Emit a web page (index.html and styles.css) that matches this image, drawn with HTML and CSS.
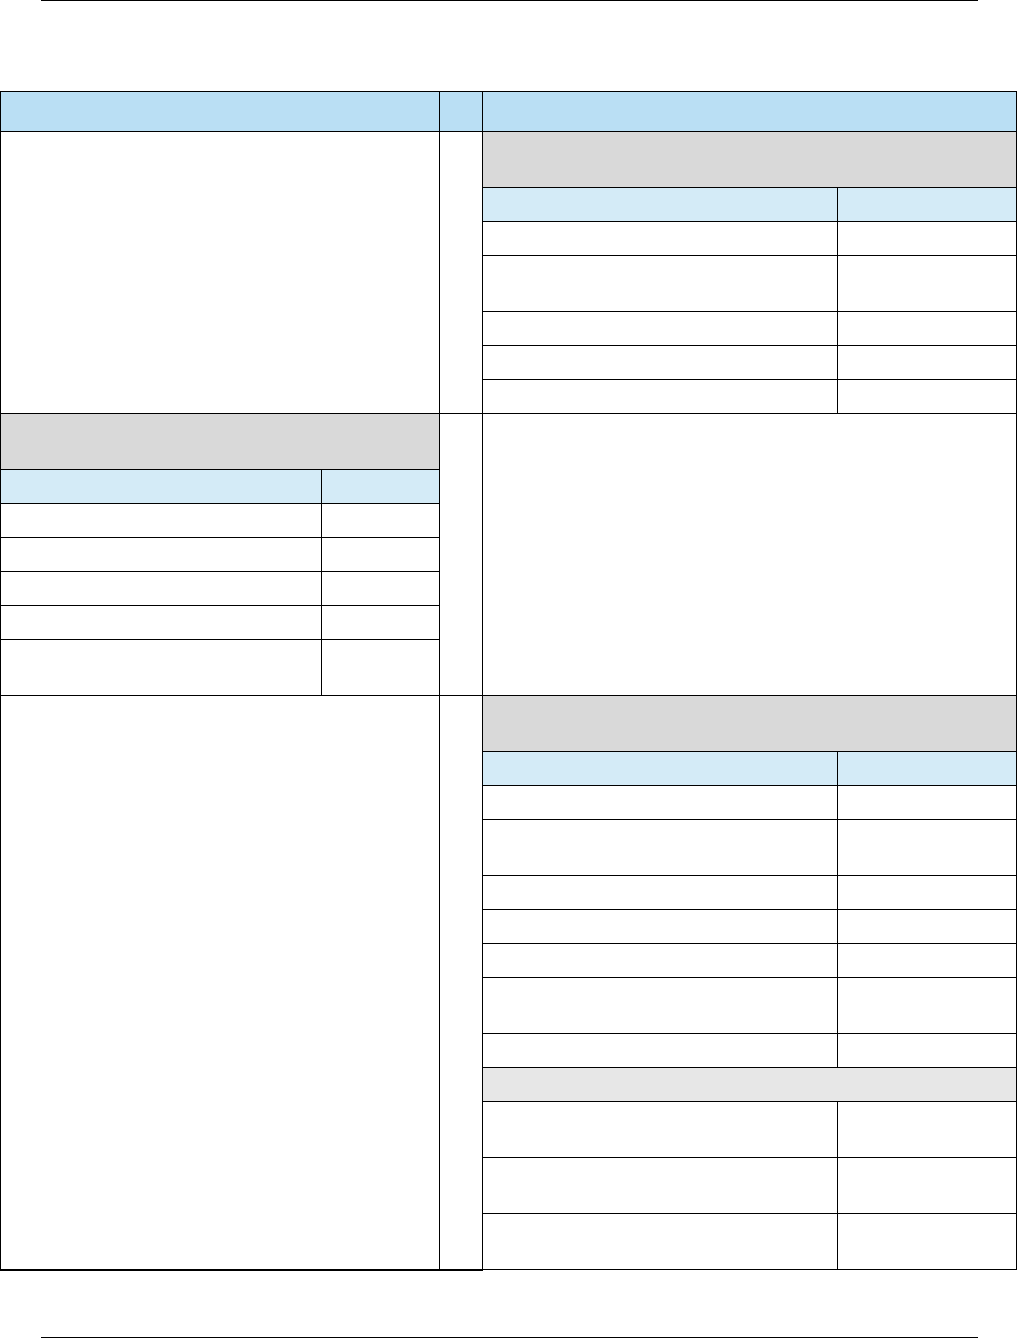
FILE: index.html
```html
<!DOCTYPE html>
<html lang="en">
<head>
    <meta charset="UTF-8">
    <meta name="viewport" content="width=device-width, initial-scale=1.0">
    <title>Table</title>
    <link rel="stylesheet" href="styles.css">
</head>
<body>
    <div class="rule rule-top"></div>

    <table class="grid">
        <colgroup>
            <col class="col-left">
            <col class="col-mid">
            <col class="col-right">
        </colgroup>
        <tr class="head">
            <td></td>
            <td></td>
            <td></td>
        </tr>
        <tr class="block">
            <td></td>
            <td></td>
            <td class="holder">
                <table class="sub">
                    <colgroup><col class="sub-wide"><col></colgroup>
                    <tr class="r55"><td class="title" colspan="2"></td></tr>
                    <tr class="r34 sub-head"><td></td><td></td></tr>
                    <tr class="r34"><td></td><td></td></tr>
                    <tr class="r56"><td></td><td></td></tr>
                    <tr class="r34"><td></td><td></td></tr>
                    <tr class="r34"><td></td><td></td></tr>
                    <tr class="r34"><td></td><td></td></tr>
                </table>
            </td>
        </tr>
        <tr class="block">
            <td class="holder">
                <table class="sub">
                    <colgroup><col class="sub-narrow"><col></colgroup>
                    <tr class="r55"><td class="title" colspan="2"></td></tr>
                    <tr class="r34 sub-head"><td></td><td></td></tr>
                    <tr class="r34"><td></td><td></td></tr>
                    <tr class="r34"><td></td><td></td></tr>
                    <tr class="r34"><td></td><td></td></tr>
                    <tr class="r34"><td></td><td></td></tr>
                    <tr class="r56"><td></td><td></td></tr>
                </table>
            </td>
            <td></td>
            <td></td>
        </tr>
        <tr class="block last">
            <td class="thick"></td>
            <td class="thick"></td>
            <td class="holder">
                <table class="sub">
                    <colgroup><col class="sub-wide"><col></colgroup>
                    <tr class="r55"><td class="title" colspan="2"></td></tr>
                    <tr class="r34 sub-head"><td></td><td></td></tr>
                    <tr class="r34"><td></td><td></td></tr>
                    <tr class="r56"><td></td><td></td></tr>
                    <tr class="r34"><td></td><td></td></tr>
                    <tr class="r34"><td></td><td></td></tr>
                    <tr class="r34"><td></td><td></td></tr>
                    <tr class="r56"><td></td><td></td></tr>
                    <tr class="r34"><td></td><td></td></tr>
                    <tr class="r34"><td class="group" colspan="2"></td></tr>
                    <tr class="r56"><td></td><td></td></tr>
                    <tr class="r56"><td></td><td></td></tr>
                    <tr class="r56"><td></td><td></td></tr>
                </table>
            </td>
        </tr>
    </table>

    <div class="rule rule-bottom"></div>
</body>
</html>
```

FILE: styles.css
```css
body {
    margin: 0;
    width: 1017px;
    font-family: "Liberation Sans", Arial, sans-serif;
    background: #fff;
}
.rule {
    margin: 0 39px 0 41px;
    border-top: 1px solid #000;
}
.rule-bottom {
    margin-top: 66px;
}
.grid {
    border-collapse: collapse;
    table-layout: fixed;
    width: 1017px;
    margin: 90px 0 0 0;
}
.grid > tbody > tr > td,
.grid > tr > td {
    border: 1px solid #000;
    padding: 0;
    vertical-align: top;
}
.col-left { width: 439px; }
.col-mid { width: 43px; }
.col-right { width: 533px; }
.head { height: 40px; }
.head td { background: #badff4; }
.block { height: 281px; }
.last { height: 573px; }
.grid td.thick {
    border-bottom-width: 2px;
}
.sub {
    border-collapse: collapse;
    border-style: hidden;
    table-layout: fixed;
    width: 100%;
}
.sub td {
    border: 1px solid #000;
    padding: 0;
}
.r55 { height: 55px; }
.r56 { height: 56px; }
.r34 { height: 34px; }
.sub .title { background: #d9d9d9; }
.sub .group { background: #e7e7e7; }
.sub-head td { background: #d4ebf7; }
.sub-wide { width: 354px; }
.sub-narrow { width: 320px; }
```
